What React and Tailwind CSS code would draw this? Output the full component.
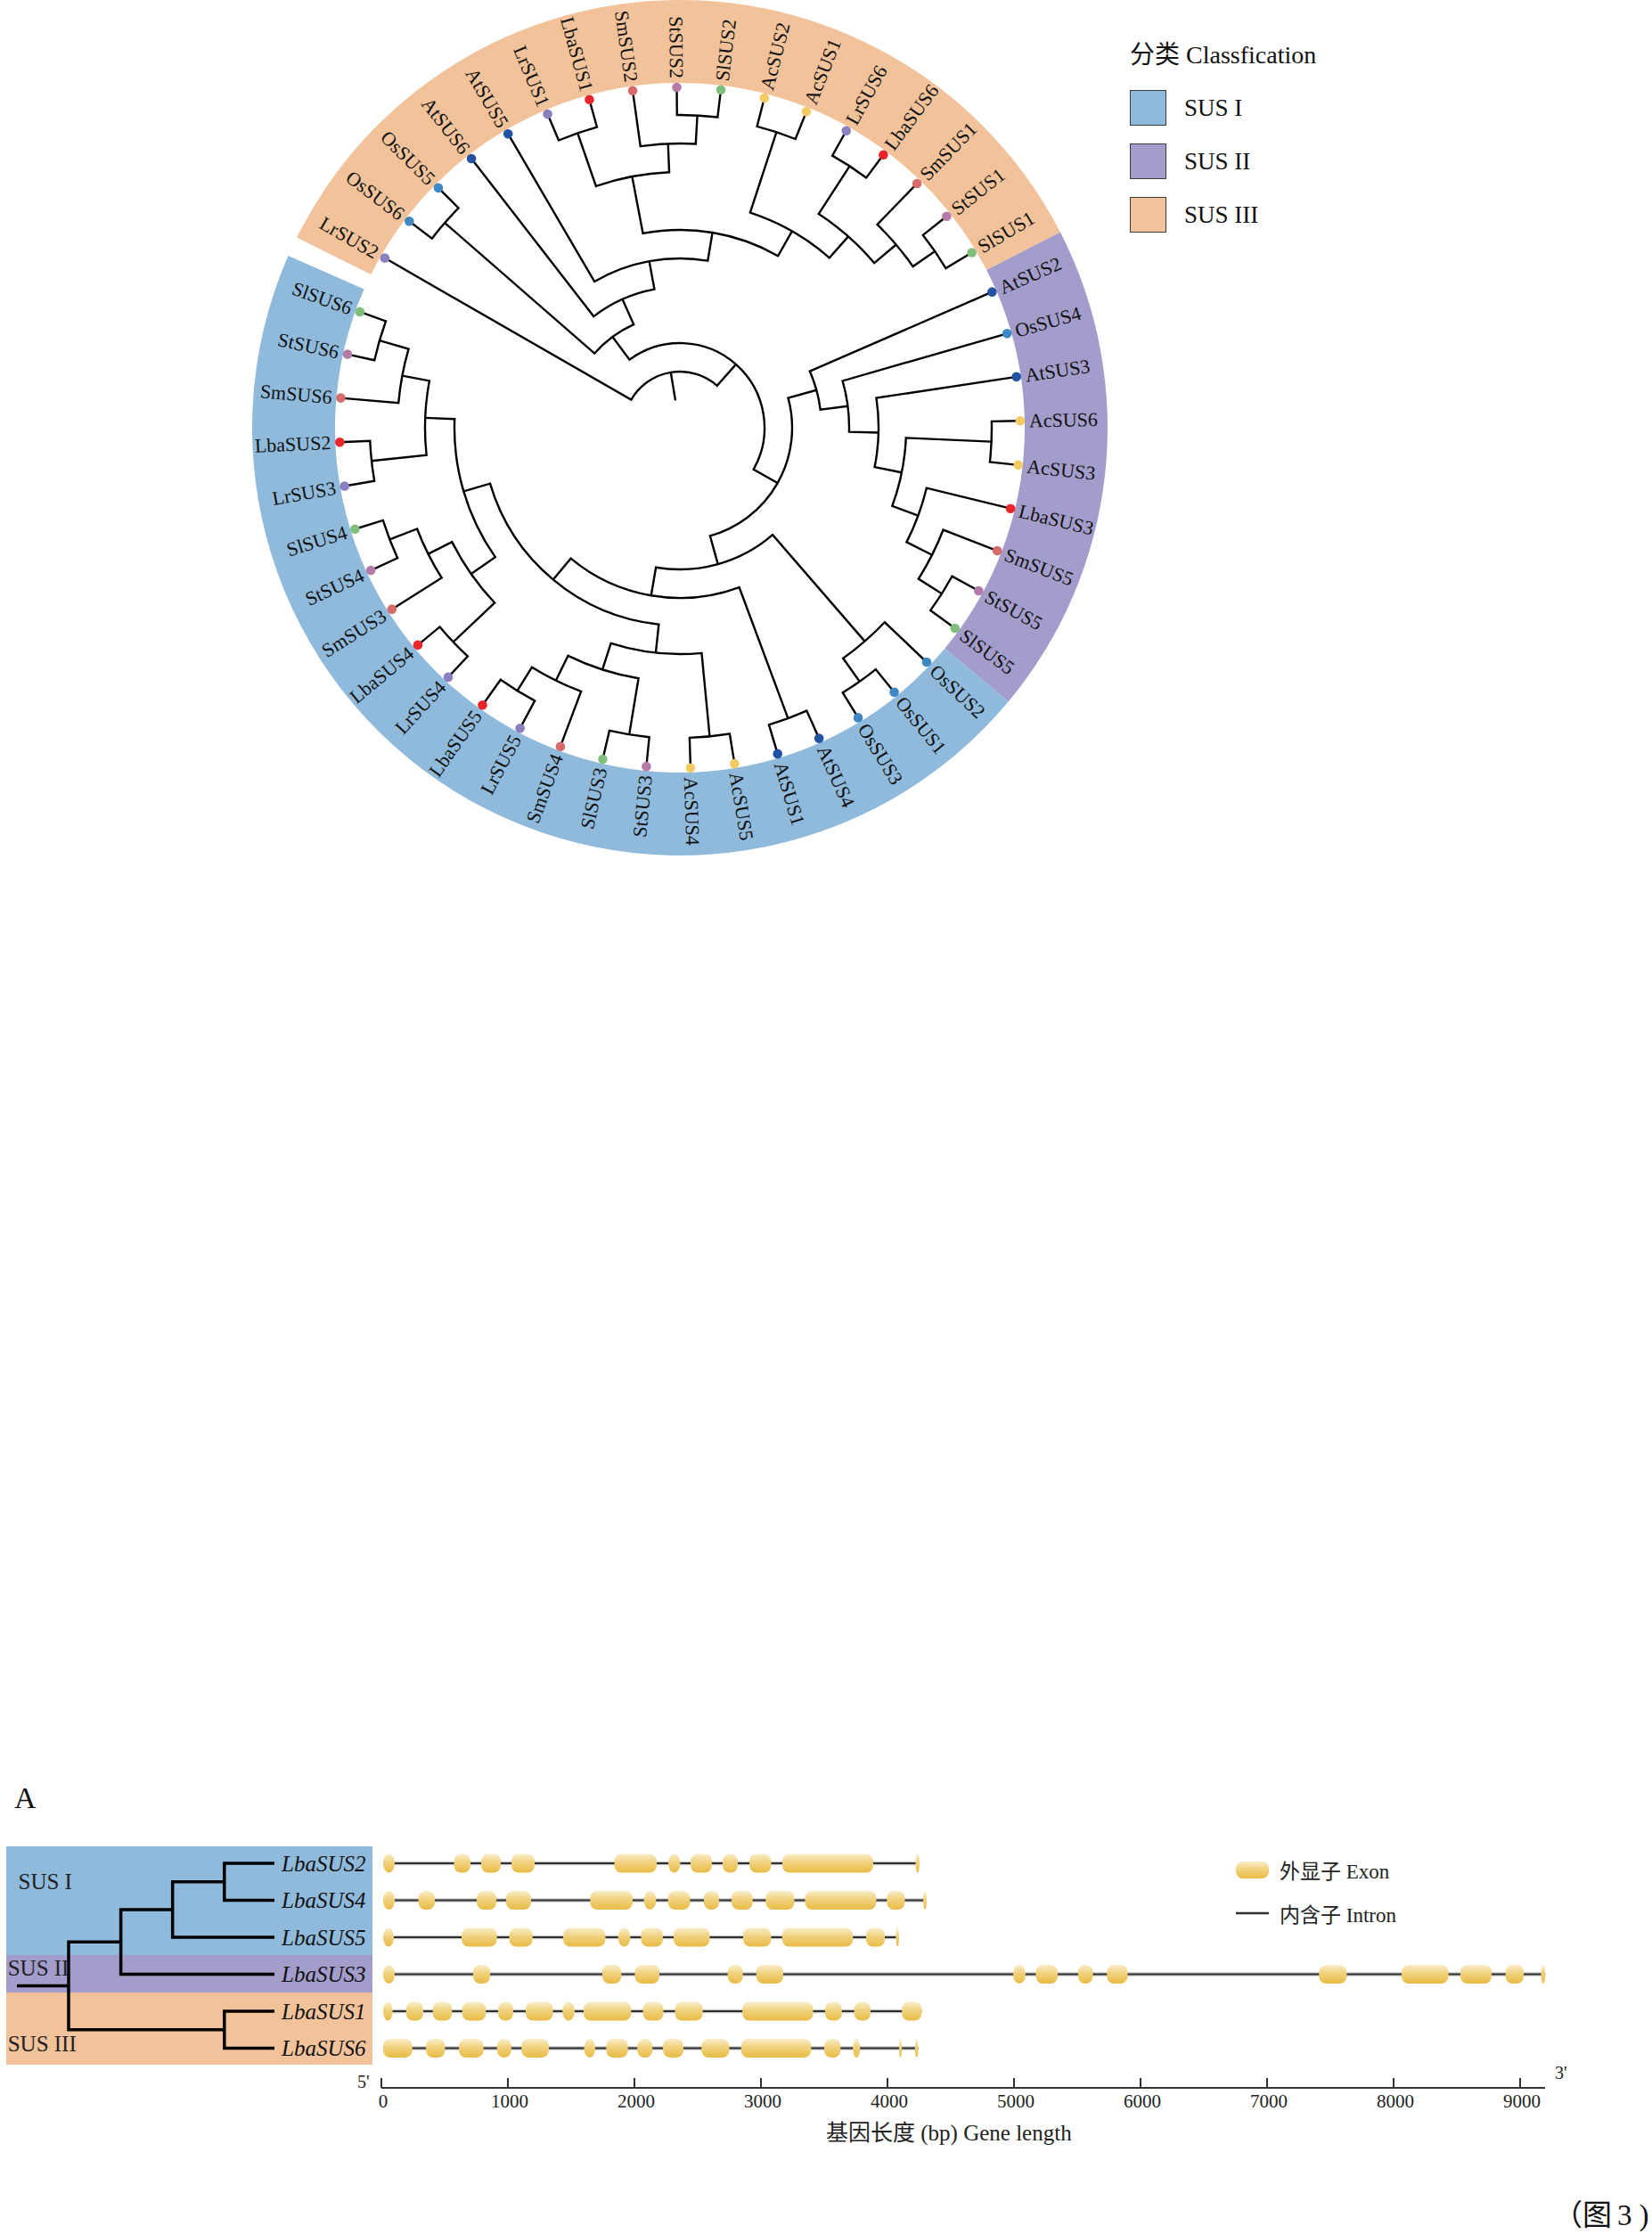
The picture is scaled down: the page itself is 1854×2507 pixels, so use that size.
import React from 'react';

const SERIF = '"Liberation Serif", "Noto Sans CJK SC", serif';

const LEAVES = ['LrSUS2','OsSUS6','OsSUS5','AtSUS6','AtSUS5','LrSUS1','LbaSUS1','SmSUS2','StSUS2','SlSUS2','AcSUS2','AcSUS1','LrSUS6','LbaSUS6','SmSUS1','StSUS1','SlSUS1','AtSUS2','OsSUS4','AtSUS3','AcSUS6','AcSUS3','LbaSUS3','SmSUS5','StSUS5','SlSUS5','OsSUS2','OsSUS1','OsSUS3','AtSUS4','AtSUS1','AcSUS5','AcSUS4','StSUS3','SlSUS3','SmSUS4','LrSUS5','LbaSUS5','LrSUS4','LbaSUS4','SmSUS3','StSUS4','SlSUS4','LrSUS3','LbaSUS2','SmSUS6','StSUS6','SlSUS6'];

const DOT = { Lba: '#e8262b', Lr: '#8a80c0', Sm: '#d66b6b', St: '#b47ba9', Sl: '#80bf7b', Ac: '#f3cb62', At: '#2452a3', Os: '#3f87c3' };
const dotColor = (name) => {
  for (const k of ['Lba', 'Lr', 'Sm', 'St', 'Sl', 'Ac', 'At', 'Os']) if (name.startsWith(k)) return DOT[k];
  return '#000';
};

const n = (r, a, b) => ({ r, c: [a, b] });
const TREE = n(63, 0, n(95,
  n(127, n(350, 1, 2), n(158, 3, n(190, 4, n(222,
    n(287, n(350, 5, 6), n(319, 7, n(351, 8, 9))),
    n(254, n(349, 10, 11), n(286, n(350, 12, 13), n(318, 14, n(348, 15, 16))))
  )))),
  n(126,
    n(159, 17, n(190, 18, n(223, 19, n(254, n(350, 20, 21), n(285, 22, n(317, 23, n(348, 24, 25))))))),
    n(159,
      n(317, 26, n(349, 27, 28)),
      n(191, n(348, 29, 30), n(222,
        n(254, n(348, 31, 32), n(285, n(349, 33, 34), n(316, 35, n(347, 36, 37)))),
        n(253,
          n(286, n(350, 38, 39), n(316, 40, n(349, 41, 42))),
          n(286, n(348, 43, 44), n(317, 45, n(351, 46, 47)))
        )
      ))
    )
  )
));

const STEP = 7.447;
const START = -60.1;
const leafAng = (i) => START + STEP * i;
const CX = 480, CY = 480, LEAF_R = 382;
const rad = (d) => (d * Math.PI) / 180;
const pt = (r, a) => [CX + r * Math.sin(rad(a)), CY - r * Math.cos(rad(a))];
const nodeAng = (nd) => (typeof nd === 'number' ? leafAng(nd) : (nodeAng(nd.c[0]) + nodeAng(nd.c[1])) / 2);
const nodeR = (nd) => (typeof nd === 'number' ? LEAF_R : nd.r);

function buildPaths(nd, out) {
  if (typeof nd === 'number') return;
  const [a, b] = nd.c;
  const aa = nodeAng(a), ab = nodeAng(b);
  const [x1, y1] = pt(nodeR(a), aa);
  const [x2, y2] = pt(nd.r, aa);
  const [x3, y3] = pt(nd.r, ab);
  const [x4, y4] = pt(nodeR(b), ab);
  const large = ab - aa > 180 ? 1 : 0;
  out.push(`M${x1} ${y1}L${x2} ${y2}A${nd.r} ${nd.r} 0 ${large} 1 ${x3} ${y3}L${x4} ${y4}`);
  buildPaths(a, out);
  buildPaths(b, out);
}

function sector(a0, a1, r0, r1) {
  const [ax, ay] = pt(r1, a0);
  const [bx, by] = pt(r1, a1);
  const [cx, cy] = pt(r0, a1);
  const [dx, dy] = pt(r0, a0);
  const l = a1 - a0 > 180 ? 1 : 0;
  return `M${ax} ${ay}A${r1} ${r1} 0 ${l} 1 ${bx} ${by}L${cx} ${cy}A${r0} ${r0} 0 ${l} 0 ${dx} ${dy}Z`;
}

function CircleTree() {
  const paths = [];
  buildPaths(TREE, paths);
  const ra = nodeAng(TREE);
  const [s1x, s1y] = pt(31, ra);
  const [s2x, s2y] = pt(63, ra);
  return (
    <svg width="960" height="960" viewBox="0 0 960 960" fontFamily={SERIF}>
      <path d={sector(-63.6, 62.8, 387, 480)} fill="#f2c39b" />
      <path d={sector(62.8, 129.8, 387, 480)} fill="#a39dcb" />
      <path d={sector(129.8, 293.7, 387, 480)} fill="#8fbadb" />
      <g fill="none" stroke="#000" strokeWidth="2.4" strokeLinejoin="miter">
        <path d={`M${s1x} ${s1y}L${s2x} ${s2y}`} />
        {paths.map((d, i) => (
          <path key={i} d={d} />
        ))}
      </g>
      {LEAVES.map((name, i) => {
        const a = leafAng(i);
        const [x, y] = pt(LEAF_R, a);
        return <circle key={name} cx={x} cy={y} r="5.3" fill={dotColor(name)} />;
      })}
      {LEAVES.map((name, i) => {
        const a = leafAng(i);
        const na = ((a % 360) + 360) % 360;
        const right = na < 180;
        const [x, y] = pt(392, a);
        const rot = right ? a - 90 : a + 90;
        return (
          <text
            key={name}
            x={x}
            y={y}
            transform={`rotate(${rot} ${x} ${y})`}
            textAnchor={right ? 'start' : 'end'}
            dominantBaseline="central"
            fontSize="22"
            fill="#111"
          >
            {name}
          </text>
        );
      })}
    </svg>
  );
}

const OFF = 2035;
const ROWS = [56, 97.5, 139, 180.5, 222, 263.5];
const GENES = [
  { name: 'LbaSUS2', ex: [[430, 443], [509.5, 528], [540, 562], [574, 600], [689.5, 737], [750, 763.5], [775, 799], [811, 828], [841, 865.5], [878, 980], [1027.5, 1032]] },
  { name: 'LbaSUS4', ex: [[430, 443], [469.6, 488], [535, 557], [568, 596], [662.4, 710], [722.6, 736.3], [749.7, 774.4], [790, 807], [821, 844.7], [859.4, 891.5], [903.5, 983.4], [995.3, 1015.5], [1036.2, 1040]] },
  { name: 'LbaSUS5', ex: [[430, 442], [518, 557.7], [571.5, 597.7], [632, 679.4], [693.6, 707.4], [719.4, 744], [756, 796.5], [834, 865.4], [877.8, 957.2], [972, 993], [1005.4, 1009]] },
  { name: 'LbaSUS3', ex: [[430, 443], [531, 550], [676, 697.3], [712.5, 740], [816.7, 833.7], [848.8, 879], [1137, 1151], [1162.5, 1187], [1210, 1226.5], [1242.3, 1265.5], [1480.3, 1511.4], [1573, 1625.6], [1639, 1674], [1689.7, 1710], [1729.5, 1734.2]] },
  { name: 'LbaSUS1', ex: [[430, 440.7], [455.8, 475], [485.7, 507.2], [518.7, 545.3], [559, 576], [590, 620.6], [631.2, 645], [655, 708.3], [721.6, 744.6], [757.5, 788.7], [833.2, 912.6], [926, 944.8], [958.6, 977], [1012.2, 1034.3]] },
  { name: 'LbaSUS6', ex: [[430, 462.7], [478, 499.4], [515, 542.6], [557.7, 573.8], [585.3, 616], [655.5, 668], [680.3, 704.7], [715.2, 732.2], [744, 767], [787.3, 818.5], [831.8, 910.3], [925, 943.3], [957.2, 965.2], [1009, 1012.2], [1026.9, 1030.6]] },
];

function Exon({ x1, x2, y }) {
  const w = x2 - x1;
  const narrow = w < 16;
  const rx = narrow ? w / 2 : 8;
  const ry = narrow ? 10.5 : 8;
  return <rect x={x1} y={y - 10.5} width={w} height="21" rx={rx} ry={ry} fill="url(#exonGrad)" />;
}

function GeneChart() {
  const y = ROWS;
  const m01 = (y[0] + y[1]) / 2;
  const m012 = (m01 + y[2]) / 2;
  const m0123 = (m012 + y[3]) / 2;
  const m45 = (y[4] + y[5]) / 2;
  const root = (m0123 + m45) / 2;
  const X0 = 428, K = 142;
  return (
    <svg width="1854" height="385" viewBox="0 0 1854 385" fontFamily={SERIF}>
      <defs>
        <linearGradient id="exonGrad" x1="0" y1="0" x2="0" y2="1">
          <stop offset="0" stopColor="#f9edc9" />
          <stop offset="0.45" stopColor="#f1d27e" />
          <stop offset="1" stopColor="#e8bb45" />
        </linearGradient>
      </defs>
      <rect x="7" y={2072 - OFF} width="411" height="122" fill="#8fbadb" />
      <rect x="7" y={2194 - OFF} width="411" height="42" fill="#a39dcb" />
      <rect x="7" y={2236 - OFF} width="411" height="81" fill="#f2c39b" />
      <text x="20.5" y={2120 - OFF} fontSize="25" fill="#222">SUS I</text>
      <text x="8.7" y={2216.7 - OFF} fontSize="25" fill="#222">SUS II</text>
      <text x="8.7" y={2301.7 - OFF} fontSize="25" fill="#222">SUS III</text>
      <g fill="none" stroke="#000" strokeWidth="3.5" strokeLinejoin="miter">
        <path d={`M308 ${y[0]}H251.8V${y[1]}H308`} />
        <path d={`M251.8 ${m01}H193.7V${y[2]}H308`} />
        <path d={`M193.7 ${m012}H135.6V${y[3]}H308`} />
        <path d={`M308 ${y[4]}H251.8V${y[5]}H308`} />
        <path d={`M135.6 ${m0123}H77V${m45}H251.8`} />
        <path d={`M19 ${root}H77`} />
      </g>
      {GENES.map((g, i) => (
        <text key={g.name} x="316" y={y[i]} dominantBaseline="central" fontSize="25" fontStyle="italic" fill="#111">
          {g.name}
        </text>
      ))}
      {GENES.map((g, i) => {
        const s = g.ex[0][0];
        const e = g.ex[g.ex.length - 1][1];
        return (
          <g key={g.name + 'gene'}>
            <line x1={s} y1={y[i]} x2={e} y2={y[i]} stroke="#c9c9c9" strokeWidth="4.5" />
            <line x1={s} y1={y[i]} x2={e} y2={y[i]} stroke="#2f2f2f" strokeWidth="2" />
            {g.ex.map(([a, b], j) => (
              <Exon key={j} x1={a} x2={b} y={y[i]} />
            ))}
          </g>
        );
      })}
      <rect x="1387" y={2089 - OFF} width="37" height="19" rx="8" ry="8" fill="url(#exonGrad)" />
      <text x="1436" y={2108 - OFF} fontSize="23" fill="#222">外显子 Exon</text>
      <line x1="1387" y1={2147 - OFF} x2="1424" y2={2147 - OFF} stroke="#2f2f2f" strokeWidth="2.5" />
      <text x="1436" y={2157 - OFF} fontSize="23" fill="#222">内含子 Intron</text>
      <g stroke="#333" strokeWidth="2">
        <line x1={X0} y1={2343 - OFF} x2="1734" y2={2343 - OFF} />
        {[0, 1, 2, 3, 4, 5, 6, 7, 8, 9].map((k) => (
          <line key={k} x1={X0 + k * K} y1={2332 - OFF} x2={X0 + k * K} y2={2343 - OFF} />
        ))}
      </g>
      {[0, 1, 2, 3, 4, 5, 6, 7, 8, 9].map((k) => (
        <text key={k} x={X0 + k * K + 2} y={2365 - OFF} fontSize="21" textAnchor="middle" fill="#222">
          {k * 1000}
        </text>
      ))}
      <text x="401" y={2343 - OFF} fontSize="20" fill="#222">5'</text>
      <text x="1745" y={2333 - OFF} fontSize="20" fill="#222">3'</text>
      <text x="927" y={2402 - OFF} fontSize="25" fill="#222">基因长度 (bp) Gene length</text>
    </svg>
  );
}

const LEGEND = [
  { label: 'SUS I', cls: 'bg-[#8fbadb]' },
  { label: 'SUS II', cls: 'bg-[#a39dcb]' },
  { label: 'SUS III', cls: 'bg-[#f2c39b]' },
];

export default function App() {
  return (
    <div className="relative w-[1854px] h-[2507px] overflow-hidden bg-white text-[#111] font-['Liberation_Serif','Noto_Sans_CJK_SC',serif]">
      <div className="flex">
        <div className="ml-[283px] w-[960px] h-[960px] shrink-0">
          <CircleTree />
        </div>
        <div className="ml-[25px] pt-[48px] flex flex-col">
          <div className="text-[28px] leading-[27px] whitespace-nowrap">分类 Classfication</div>
          <div className="mt-[26px] flex flex-col gap-[20px]">
            {LEGEND.map((l) => (
              <div key={l.label} className="flex items-center h-[40px]">
                <div className={`w-[41px] h-[40px] border-[1.5px] border-[#3a3a3a] ${l.cls}`} />
                <span className="ml-[20px] text-[27px] leading-[27px] whitespace-nowrap">{l.label}</span>
              </div>
            ))}
          </div>
        </div>
      </div>
      <div className="mt-[1041px] pl-[16px] h-[34px] text-[34px] leading-[34px]">A</div>
      <div className="h-[385px]">
        <GeneChart />
      </div>
      <div className="mt-[49px] pl-[1743px] text-[33px] leading-[34px] whitespace-nowrap">
        （图<span className="ml-[6px]">3</span><span className="ml-[8px]">)</span>
      </div>
    </div>
  );
}
